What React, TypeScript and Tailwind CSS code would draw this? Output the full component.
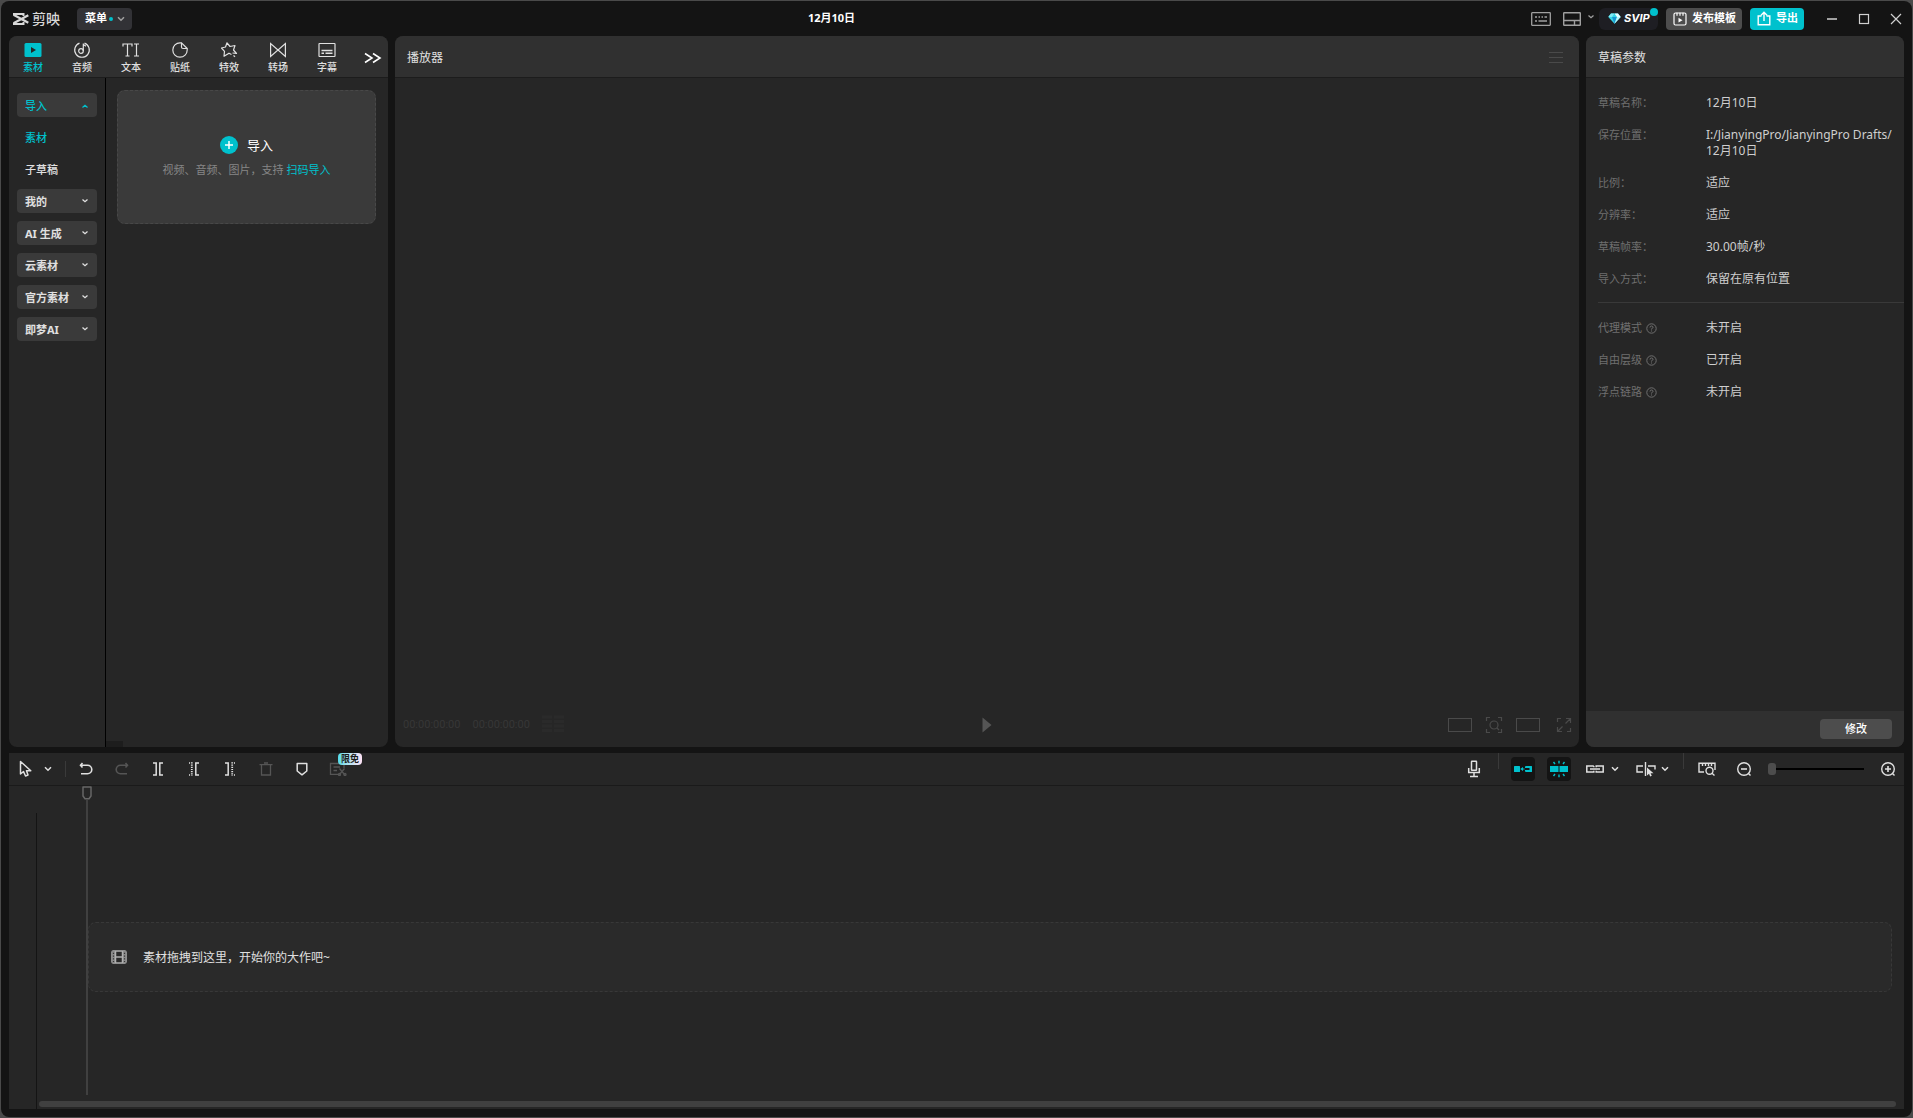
import type { ReactNode, SVGProps } from "react";

type IconProps = SVGProps<SVGSVGElement>;

function Svg({ children, ...props }: IconProps) {
  return (
    <svg fill="none" stroke="currentColor" aria-hidden="true" {...props}>
      {children}
    </svg>
  );
}

const Chevron = ({ className = "" }: { className?: string }) => (
  <Svg width="8" height="6" viewBox="0 0 8 6" strokeWidth="1.5" className={className}>
    <path d="M1 1.2 4 4.2 7 1.2" />
  </Svg>
);

const SmallChevron = ({ className = "" }: { className?: string }) => (
  <Svg width="8" height="6" viewBox="0 0 8 6" strokeWidth="1.3" className={className}>
    <path d="M1.5 1.5 4 3.7 6.5 1.5" />
  </Svg>
);

const LogoIcon = () => (
  <Svg width="17" height="14" viewBox="0 0 17 14" strokeWidth="2.2">
    <path d="M16.3 3.2 1.5 11.2M16.3 10.8 1.5 2.8" />
    <path d="M1 2H11.500V4M1 12H11.500V10" strokeWidth="2" />
  </Svg>
);

const MediaIcon = () => (
  <Svg width="18" height="16" viewBox="0 0 18 16" stroke="none">
    <rect x="0.500" y="1" width="17" height="14" rx="1.500" fill="#00c1cd" />
    <path d="M7 5v6l5-3z" fill="#262626" />
  </Svg>
);

const AudioIcon = () => (
  <Svg width="18" height="16" viewBox="0 0 18 16" strokeWidth="1.2">
    <path d="M11.500 1.100A7.300 7.300 0 1 1 6.500 1.100" />
    <circle cx="8" cy="9" r="2.300" />
    <path d="M10.300 9V1.500q.3 2 2.700 2.600" />
  </Svg>
);

const TextIcon = () => (
  <Svg width="18" height="16" viewBox="0 0 18 16" strokeWidth="1.2">
    <path d="M1 4.500V2H10V4.500M5.500 2V14M3.500 14H7.500M12 2H17M14.500 2V14M12 14H17" />
  </Svg>
);

const StickerIcon = () => (
  <Svg width="18" height="16" viewBox="0 0 18 16" strokeWidth="1.2" strokeLinejoin="round">
    <path d="M10.500 .8H9A7.200 7.200 0 1 0 16.200 8V6.500Z" />
    <path d="M10.500 .8V5Q10.500 6.500 12 6.500H16.200" />
  </Svg>
);

const EffectIcon = () => (
  <Svg width="18" height="16" viewBox="0 0 18 16" strokeWidth="1.200" strokeLinejoin="round">
    <path d="M11.500 12.500 9 11.200 4 14.200 4.500 9.300 1.500 6 5.500 5 7 .8 10 4.500 15 3.500 13.500 8 16.500 11.500 12.500 11" />
    <path d="M13.500 13.500l1.500 1.200" />
  </Svg>
);

const TransitionIcon = () => (
  <Svg width="18" height="16" viewBox="0 0 18 16" strokeWidth="1.200">
    <path d="M1.600 1.500V14.500L9 8ZM16.400 1.500V14.500L9 8Z" />
  </Svg>
);

const CaptionIcon = () => (
  <Svg width="18" height="16" viewBox="0 0 18 16" strokeWidth="1.200">
    <rect x="1" y="1.500" width="16" height="13" rx="0.500" />
    <path d="M3.500 8.500H14.500M3.500 11.300H6M7.500 11.300H14.500" strokeWidth="1.500" />
  </Svg>
);

const MoreIcon = () => (
  <Svg width="18" height="12" viewBox="0 0 18 12" strokeWidth="1.600">
    <path d="M1 1.500 8 6 1 10.500M9 1.500 16 6 9 10.500" />
  </Svg>
);

const CursorIcon = () => (
  <Svg width="14" height="18" viewBox="0 0 14 18" strokeWidth="1.500" strokeLinejoin="round">
    <path d="M1.500 1.500V14L4.500 11.500 6.500 16 9 15 7.500 10.800H11.800Z" />
  </Svg>
);

const UndoIcon = ({ className = "" }: { className?: string }) => (
  <Svg width="14" height="14" viewBox="0 0 14 14" strokeWidth="1.600" className={className}>
    <path d="M3.500 1 1.500 3.200 3.500 5.500M1.500 3.200H8.500A4.200 4.200 0 0 1 8.500 11.800H2" />
  </Svg>
);

const SplitIcon = () => (
  <Svg width="12" height="14" viewBox="0 0 12 14" strokeWidth="1.500">
    <path d="M1 1H4.200V13H1M11 1H7.800V13H11" />
  </Svg>
);

const SplitLeftIcon = ({ className = "" }: { className?: string }) => (
  <Svg width="12" height="14" viewBox="0 0 12 14" strokeWidth="1.500" className={className}>
    <path d="M11 1H7.800V13H11" />
    <path d="M3.800 0.300V14" strokeDasharray="1.200 1" strokeWidth="1.800" />
    <path d="M1 1H2M1 13H2" />
  </Svg>
);

const TrashIcon = () => (
  <Svg width="14" height="14" viewBox="0 0 14 14" strokeWidth="1.300">
    <path d="M.5 2.700H13.500M5 1H9M2.500 2.700V13H11.500V2.700" />
  </Svg>
);

const MarkerIcon = () => (
  <Svg width="12" height="14" viewBox="0 0 12 14" strokeWidth="1.500" strokeLinejoin="round">
    <path d="M1.200 1.500H10.800V9L6 12.800 1.200 9Z" />
  </Svg>
);

const TextCutIcon = () => (
  <Svg width="18" height="14" viewBox="0 0 18 14" strokeWidth="1.300">
    <path d="M9 12.300H1.500V1.500H15V6M4.500 5H11M4.500 8.500H8" />
    <path d="M10.500 6.500 15.500 12.500M15.500 6.500 10.500 12.500" />
    <circle cx="10.500" cy="12.500" r="1" />
    <circle cx="16" cy="12.500" r="1" />
  </Svg>
);

const MicIcon = () => (
  <Svg width="14" height="18" viewBox="0 0 14 18" strokeWidth="1.500">
    <rect x="4.500" y="1.200" width="5" height="9" rx="0.500" />
    <path d="M1.700 8V12.500H12.300V8M7 12.500V16.500M3 16.500H11" />
  </Svg>
);

const MagnetIcon = () => (
  <Svg width="20" height="10" viewBox="0 0 20 10" stroke="none" fill="currentColor">
    <rect x="1" y="2" width="6" height="6" rx="0.500" />
    <path d="M13 2h5.500a.5.5 0 0 1 .5.5v5a.5.5 0 0 1-.5.5H13a1 1 0 0 1-1-1V6h4.500V4H12V3a1 1 0 0 1 1-1z" />
    <path d="M7.200 5 10 3V7zM10 4.500H11.500V5.500H10z" />
  </Svg>
);

const SnapIcon = () => (
  <Svg width="20" height="18" viewBox="0 0 20 18" strokeWidth="1.400">
    <path d="M1 6H9.500V12H1ZM10.500 6H19V12H10.500Z" fill="currentColor" stroke="none" />
    <path d="M10 .8V3.500M10 14.500V17.200M4.500 2 6 4M15.500 2 14 4M4.500 16 6 14M15.500 16 14 14" />
  </Svg>
);

const LinkIcon = () => (
  <Svg width="20" height="10" viewBox="0 0 20 10" strokeWidth="1.500">
    <path d="M8.800 2H1.800V8H8.800V6.800M11.200 3.200V2H18.200V8H11.200V6.800M8.800 2V3.200M5 5H15" />
  </Svg>
);

const SplitCursorIcon = () => (
  <Svg width="22" height="16" viewBox="0 0 22 16" strokeWidth="1.400">
    <path d="M8 5H2V11H8M13 5H20V8.500M10.500 1V15" />
    <path d="M12 6.500V14.500L14 12.800 15.200 15.500 16.800 14.800 15.600 12.300H18.500Z" fill="currentColor" stroke="none" />
  </Svg>
);

const RulerIcon = () => (
  <Svg width="18" height="14" viewBox="0 0 18 14" strokeWidth="1.400">
    <path d="M6 10H1V1.200H17V8M4.500 1.500V4M7.500 1.500V4M10.500 1.500V4M13.500 1.500V4" />
    <circle cx="11.500" cy="8.800" r="3.500" />
    <path d="M14 11.300 16.500 13.500" />
  </Svg>
);

const ZoomIcon = ({ plus = false }: { plus?: boolean }) => (
  <Svg width="16" height="16" viewBox="0 0 16 16" strokeWidth="1.400">
    <circle cx="8" cy="8" r="6.300" />
    <path d={plus ? "M5 8H11M8 5V11" : "M5 8H11"} strokeWidth="1.600" />
    <path d="M12.500 12.500 14.500 14.500" />
  </Svg>
);

const FilmIcon = () => (
  <Svg width="16" height="14" viewBox="0 0 16 14" strokeWidth="1.500">
    <rect x="1" y="1" width="14" height="12" rx="1.200" />
    <path d="M2.600 1V13M13.400 1V13" strokeWidth="3.200" className="text-[#8a8a8a]" />
    <path d="M4.500 1V13M11.500 1V13M4.500 7H11.500" />
    <path d="M2.500 2.700V12M13.500 2.700V12" strokeWidth="1.200" strokeDasharray="1.200 1.600" className="text-[#333]" />
  </Svg>
);

const KeyboardIcon = () => (
  <Svg width="20" height="14" viewBox="0 0 20 14" strokeWidth="1.300">
    <rect x="0.700" y="0.700" width="18.600" height="12.600" rx="0.500" />
    <path d="M4 5H6M7.500 5H9M10.500 5H12M13.500 5H16M4 9H6M7.500 9H16" />
  </Svg>
);

const LayoutIcon = () => (
  <Svg width="18" height="14" viewBox="0 0 18 14" strokeWidth="1.400">
    <rect x="0.700" y="0.700" width="16.600" height="12.600" rx="0.500" />
    <path d="M.7 8.500H17.300M11.500 8.500V13.300" />
  </Svg>
);

const DiamondIcon = () => (
  <Svg width="13" height="11" viewBox="0 0 13 11" stroke="none">
    <path d="M3 .5H10L12.700 4 6.500 10.700.3 4Z" fill="#35d6e6" />
    <path d="M3 .5H6.500L4 4H.3Z" fill="#7fe9f5" />
    <path d="M6.500 .5H10L12.700 4H9Z" fill="#e8fdff" />
    <path d="M4 4H9L6.500 10.700Z" fill="#1796d2" />
    <path d="M9 4H12.700L6.500 10.700Z" fill="#b8f6fb" />
  </Svg>
);

const TemplateIcon = () => (
  <Svg width="14" height="14" viewBox="0 0 14 14" strokeWidth="1.200">
    <rect x="1" y="1" width="12" height="12" rx="1.500" />
    <path d="M4 .8V3.800M7 .8V3.800M10 .8V3.800" />
    <path d="M5.500 5.800V10.600L9.500 8.200Z" fill="currentColor" stroke="none" />
  </Svg>
);

const ExportIcon = () => (
  <Svg width="14" height="15" viewBox="0 0 14 15" strokeWidth="1.400">
    <path d="M4.500 5H1.200V13.800H12.800V5H9.500M7 10V1.500M4 4.200 7 1.200 10 4.200" />
  </Svg>
);

const FocusIcon = () => (
  <Svg width="18" height="18" viewBox="0 0 18 18" strokeWidth="1.200">
    <path d="M1.500 5V1.500H5M13 1.500H16.500V5M16.500 13V16.500H13M5 16.500H1.500V13" />
    <circle cx="9" cy="9" r="4" />
    <path d="M12 12 14 14" />
  </Svg>
);

const ExpandIcon = () => (
  <Svg width="16" height="16" viewBox="0 0 16 16" strokeWidth="1.200">
    <path d="M1.500 5V1.500H5M10 1.500H14.500V6M14.500 11V14.500H11M6 14.500H1.500V10M14.500 1.500 9.500 6.500M1.500 14.500 6.500 9.500" />
  </Svg>
);

const HelpIcon = () => (
  <Svg width="11" height="11" viewBox="0 0 11 11" strokeWidth="1">
    <circle cx="5.500" cy="5.500" r="4.700" />
    <path d="M4 4.500Q4 3 5.500 3T7 4.400Q7 5.200 5.500 5.800V6.500M5.500 7.500V8.500" />
  </Svg>
);

const tabs: { label: string; icon: ReactNode }[] = [
  { label: "素材", icon: <MediaIcon /> },
  { label: "音频", icon: <AudioIcon /> },
  { label: "文本", icon: <TextIcon /> },
  { label: "贴纸", icon: <StickerIcon /> },
  { label: "特效", icon: <EffectIcon /> },
  { label: "转场", icon: <TransitionIcon /> },
  { label: "字幕", icon: <CaptionIcon /> },
];

const groups = ["我的", "AI 生成", "云素材", "官方素材", "即梦AI"];

const params = [
  ["草稿名称：", "12月10日"],
  ["保存位置：", "I:/JianyingPro/JianyingPro Drafts/\n12月10日"],
  ["比例：", "适应"],
  ["分辨率：", "适应"],
  ["草稿帧率：", "30.00帧/秒"],
  ["导入方式：", "保留在原有位置"],
];

const switches = [
  ["代理模式", "未开启"],
  ["自由层级", "已开启"],
  ["浮点链路", "未开启"],
];

function TitleBar() {
  return (
    <header className="flex h-[35px] shrink-0 items-center pr-[10px] pl-[11px]">
      <div className="flex w-[65px] items-center gap-[3px] text-[#d8d8d8]">
        <LogoIcon />
        <span className="text-sm leading-none font-medium">剪映</span>
      </div>
      <button className="flex h-[22px] w-[55px] items-center rounded-sm bg-[#323236] pl-2 text-[11px] font-bold text-white">
        菜单
        <span className="ml-[2px] size-1 shrink-0 rounded-full bg-[#00c1cd]" />
        <Chevron className="ml-1 text-[#a0a0a0]" />
      </button>
      <h1 className="flex-1 text-center text-[11px] font-bold text-white">12月10日</h1>
      <div className="flex items-center text-[#a0a0a0]">
        <button aria-label="快捷键" className="mr-3">
          <KeyboardIcon />
        </button>
        <button aria-label="布局" className="mr-1 flex items-center gap-[6px]">
          <LayoutIcon />
          <SmallChevron className="mb-1" />
        </button>
        <button className="relative mr-2 flex h-[22px] w-[59px] items-center gap-[3px] rounded-md bg-[#1e1e23] pl-[9px] font-['Inter','Liberation_Sans',sans-serif] text-[11px] font-bold text-white italic">
          <DiamondIcon />
          SVIP
          <span className="absolute top-0 right-0 size-2 rounded-full bg-[#00c1cd]" />
        </button>
        <button className="mr-2 flex h-[22px] w-[76px] items-center gap-[5px] rounded-sm bg-[#4d4d4d] pl-[7px] text-[11px] font-bold text-white">
          <TemplateIcon />
          发布模板
        </button>
        <button className="mr-[22px] flex h-[22px] w-[54px] items-center gap-[5px] rounded-sm bg-[#00c1cd] pl-[7px] text-[11px] font-bold text-white">
          <ExportIcon />
          导出
        </button>
        <div className="flex items-center gap-5 text-[#d0d0d0]">
          <button aria-label="最小化">
            <Svg width="12" height="12" viewBox="0 0 12 12" strokeWidth="1.500">
              <path d="M1 6H11" />
            </Svg>
          </button>
          <button aria-label="最大化">
            <Svg width="12" height="12" viewBox="0 0 12 12" strokeWidth="1.200">
              <rect x="1.500" y="1.500" width="9" height="9" />
            </Svg>
          </button>
          <button aria-label="关闭">
            <Svg width="12" height="12" viewBox="0 0 12 12" strokeWidth="1.200">
              <path d="M1 1 11 11M11 1 1 11" />
            </Svg>
          </button>
        </div>
      </div>
    </header>
  );
}

function MediaPanel() {
  return (
    <section className="flex w-[379px] shrink-0 flex-col overflow-hidden rounded-lg bg-[#262626]">
      <nav className="flex h-[42px] shrink-0 border-b border-[#1c1c1c] bg-[#303030]">
        {tabs.map((tab, i) => (
          <button
            key={tab.label}
            className={
              i === 0
                ? "flex w-[49px] flex-col items-center pt-[6px] pr-px text-[10px] leading-[18px] font-medium text-[#00c1cd]"
                : "flex w-[49px] flex-col items-center pt-[6px] pr-px text-[10px] leading-[18px] font-medium text-[#e0e0e0]"
            }
          >
            {tab.icon}
            {tab.label}
          </button>
        ))}
        <button aria-label="更多" className="flex flex-1 items-center pt-[2px] pl-3 text-white">
          <MoreIcon />
        </button>
      </nav>
      <div className="flex flex-1">
        <aside className="flex w-[97px] flex-col gap-2 border-r border-black px-2 pt-[15px] text-[11px] font-bold text-[#e0e0e0]">
          <button className="flex h-6 items-center justify-between rounded bg-[#3a3a3a] px-2 pt-[2px] font-medium text-[#00c1cd]">
            导入
            <SmallChevron className="rotate-180" />
          </button>
          <button className="flex h-6 items-center px-2 pt-[2px] font-medium text-[#00c1cd]">素材</button>
          <button className="flex h-6 items-center px-2 pt-[2px] font-medium">子草稿</button>
          {groups.map((name) => (
            <button
              key={name}
              className="flex h-6 items-center justify-between rounded bg-[#3a3a3a] px-2 pt-[2px] whitespace-nowrap"
            >
              {name}
              <SmallChevron className="mb-[2px]" />
            </button>
          ))}
        </aside>
        <div className="flex flex-1 flex-col justify-between">
          <div className="mr-3 ml-[11px] mt-3 flex h-[134px] flex-col items-center justify-center gap-2 rounded-lg border border-dashed border-[#484848] bg-[#3a3a3a]">
            <button className="flex items-center gap-[9px] text-[13px] leading-[18px] text-white">
              <span className="flex size-[18px] items-center justify-center rounded-full bg-[#00c1cd]">
                <Svg width="10" height="10" viewBox="0 0 10 10" strokeWidth="1.500">
                  <path d="M1 5H9M5 1V9" />
                </Svg>
              </span>
              导入
            </button>
            <p className="text-[11px] leading-4 text-[#868686]">
              视频、音频、图片，支持{" "}
              <a href="#scan" className="text-[#00c1cd]">
                扫码导入
              </a>
            </p>
          </div>
          <div className="h-[6px] w-[17px] bg-[#1d1d1d]" />
        </div>
      </div>
    </section>
  );
}

function Player() {
  return (
    <section className="flex min-w-0 flex-1 flex-col overflow-hidden rounded-lg bg-[#262626]">
      <div className="flex h-[42px] shrink-0 items-center justify-between border-b border-[#1c1c1c] bg-[#303030] pt-[2px] pr-4 pl-3">
        <h2 className="text-xs text-[#e0e0e0]">播放器</h2>
        <button aria-label="播放器菜单" className="text-[#4a4a4a]">
          <Svg width="14" height="12" viewBox="0 0 14 12" strokeWidth="1">
            <path d="M0 .5H14M0 5.500H14M0 10.500H14" />
          </Svg>
        </button>
      </div>
      <div className="flex-1" />
      <div className="mb-[6px] grid h-8 shrink-0 grid-cols-3 items-center pr-[7px] pl-2">
        <div className="flex items-center gap-3 font-['Roboto',sans-serif] text-[11px] text-[#373737]">
          <span>00:00:00:00</span>
          <span>00:00:00:00</span>
          <Svg width="22" height="20" viewBox="0 0 22 20" strokeWidth="3" className="text-[#2a2a2a]">
            <path d="M0 2H10M12 2H22M0 6.500H10M12 6.500H22M0 11H10M12 11H22M0 15.500H10M12 15.500H22" />
          </Svg>
        </div>
        <button aria-label="播放" className="justify-self-center text-[#555]">
          <Svg width="10" height="16" viewBox="0 0 10 16" stroke="none">
            <path d="M.5 .5V15.500L9.500 8Z" fill="currentColor" />
          </Svg>
        </button>
        <div className="flex items-center justify-end text-[#4a4a4a]">
          <button aria-label="画质" className="mr-[13px] h-[14px] w-6 border border-current" />
          <button aria-label="缩放" className="mr-[13px]">
            <FocusIcon />
          </button>
          <button aria-label="比例" className="mr-4 h-[14px] w-6 border border-current" />
          <button aria-label="全屏">
            <ExpandIcon />
          </button>
        </div>
      </div>
    </section>
  );
}

function DraftPanel() {
  return (
    <section className="flex w-[318px] shrink-0 flex-col overflow-hidden rounded-lg bg-[#262626]">
      <h2 className="flex h-[42px] shrink-0 items-center border-b border-[#1c1c1c] bg-[#303030] px-3 pt-[2px] text-xs text-[#e0e0e0]">
        草稿参数
      </h2>
      <div className="flex-1 pl-3 leading-4">
        <dl className="grid grid-cols-[108px_1fr] gap-y-4 border-b border-[#393939] pt-[17px] pb-[15px]">
          {params.map(([label, value]) => (
            <div key={label} className="col-span-2 grid grid-cols-subgrid">
              <dt className="text-[11px] leading-4 text-[#6f6f6f]">{label}</dt>
              <dd className="text-xs leading-4 whitespace-pre text-[#cfcfcf]">{value}</dd>
            </div>
          ))}
        </dl>
        <dl className="grid grid-cols-[108px_1fr] gap-y-4 pt-[17px]">
          {switches.map(([label, value]) => (
            <div key={label} className="col-span-2 grid grid-cols-subgrid">
              <dt className="flex items-center gap-1 text-[11px] leading-4 text-[#6f6f6f]">
                {label}
                <HelpIcon />
              </dt>
              <dd className="text-xs leading-4 text-[#cfcfcf]">{value}</dd>
            </div>
          ))}
        </dl>
      </div>
      <div className="flex h-9 shrink-0 items-center justify-end bg-[#303030] px-3">
        <button className="h-5 w-[72px] rounded bg-[#4d4d4d] text-[11px] font-medium text-white">修改</button>
      </div>
    </section>
  );
}

function Tool({ label, dim, children }: { label: string; dim?: boolean; children: ReactNode }) {
  return (
    <button
      aria-label={label}
      disabled={dim}
      className="relative flex h-8 w-9 items-center justify-center text-[#e0e0e0] disabled:text-[#555]"
    >
      {children}
    </button>
  );
}

function Toolbar() {
  return (
    <div className="flex h-[33px] shrink-0 items-center justify-between border-b border-[#1a1a1a] pr-2 text-[#e0e0e0]">
      <div className="flex items-center">
        <button aria-label="选择" className="flex w-[56px] items-center gap-[11px] pl-[10px]">
          <CursorIcon />
          <Chevron />
        </button>
        <span className="mr-[2px] h-4 w-px bg-[#3a3a3a]" />
        <Tool label="撤销">
          <UndoIcon />
        </Tool>
        <Tool label="恢复" dim>
          <UndoIcon className="-scale-x-100" />
        </Tool>
        <Tool label="分割">
          <SplitIcon />
        </Tool>
        <Tool label="向左裁剪">
          <SplitLeftIcon />
        </Tool>
        <Tool label="向右裁剪">
          <SplitLeftIcon className="-scale-x-100" />
        </Tool>
        <Tool label="删除" dim>
          <TrashIcon />
        </Tool>
        <Tool label="标记">
          <MarkerIcon />
        </Tool>
        <Tool label="智能剪口播" dim>
          <TextCutIcon />
          <span className="absolute top-0 left-[18px] h-3 w-6 rounded-sm bg-linear-to-r from-[#4fdcea] to-[#ffe3f6] text-center text-[9px] leading-3 font-bold text-[#1a1a1a]">
            限免
          </span>
        </Tool>
      </div>
      <div className="flex items-center">
        <Tool label="录音">
          <MicIcon />
        </Tool>
        <span className="mr-3 ml-[6px] h-4 w-px self-start bg-[#3a3a3a]" />
        <button
          aria-label="主轨磁吸"
          className="mr-3 flex size-6 items-center justify-center rounded bg-[#141414] text-[#00c1cd]"
        >
          <MagnetIcon />
        </button>
        <button
          aria-label="自动吸附"
          className="mr-[14px] flex size-6 items-center justify-center rounded bg-[#141414] text-[#00c1cd]"
        >
          <SnapIcon />
        </button>
        <button aria-label="联动" className="mr-4 flex items-center gap-[6px]">
          <LinkIcon />
          <Chevron />
        </button>
        <button aria-label="预览轴" className="mr-[14px] flex items-center gap-1">
          <SplitCursorIcon />
          <Chevron />
        </button>
        <span className="mr-[14px] h-4 w-px self-start bg-[#3a3a3a]" />
        <button aria-label="适应时间线" className="mr-5">
          <RulerIcon />
        </button>
        <button aria-label="缩小" className="mr-4">
          <ZoomIcon />
        </button>
        <input
          type="range"
          aria-label="时间线缩放"
          defaultValue={0}
          className="mr-4 h-3 w-24 appearance-none bg-transparent [&::-webkit-slider-runnable-track]:h-[2px] [&::-webkit-slider-runnable-track]:bg-black [&::-webkit-slider-thumb]:-mt-[5px] [&::-webkit-slider-thumb]:h-3 [&::-webkit-slider-thumb]:w-2 [&::-webkit-slider-thumb]:appearance-none [&::-webkit-slider-thumb]:rounded-[3px] [&::-webkit-slider-thumb]:bg-[#4d4d4d]"
        />
        <button aria-label="放大">
          <ZoomIcon plus />
        </button>
      </div>
    </div>
  );
}

function Timeline() {
  return (
    <section className="flex h-[356px] shrink-0 flex-col bg-[#262626]">
      <Toolbar />
      <div className="flex flex-1">
        <div className="mt-[27px] w-7 border-r border-[#141414]" />
        <div className="relative flex flex-1 flex-col pt-[136px] pr-2 pb-[2px] pl-[2px]">
          <div className="mr-1 ml-[49px] flex h-[70px] items-center gap-4 rounded-lg border border-dashed border-[#383838] bg-[#2a2a2a] pl-[22px] text-[#b0b0b0]">
            <FilmIcon />
            <p className="pt-[2px] text-xs text-[#e0e0e0]">素材拖拽到这里，开始你的大作吧~</p>
          </div>
          <div className="mt-auto h-[6px] rounded-full bg-[#404040]" />
          <div className="absolute top-0 bottom-[14px] left-[45px] flex w-[10px] flex-col items-center">
            <Svg width="10" height="14" viewBox="0 0 10 14" strokeWidth="1.500" className="text-[#666]">
              <path d="M1 1H9V10L7 12.800H3L1 10Z" strokeLinejoin="round" />
            </Svg>
            <span className="w-[2px] flex-1 bg-[#404040]" />
          </div>
        </div>
      </div>
    </section>
  );
}

export default function App() {
  return (
    <div className="h-screen bg-[#4a4a4a] p-px font-['Noto_Sans','Noto_Sans_CJK_SC',sans-serif]">
      <div className="flex h-full flex-col rounded-lg bg-[#141414]">
        <TitleBar />
        <main className="flex min-h-0 flex-1 flex-col gap-[6px] px-2 pb-2">
          <div className="flex min-h-0 flex-1 gap-[7px]">
            <MediaPanel />
            <Player />
            <DraftPanel />
          </div>
          <Timeline />
        </main>
      </div>
    </div>
  );
}
